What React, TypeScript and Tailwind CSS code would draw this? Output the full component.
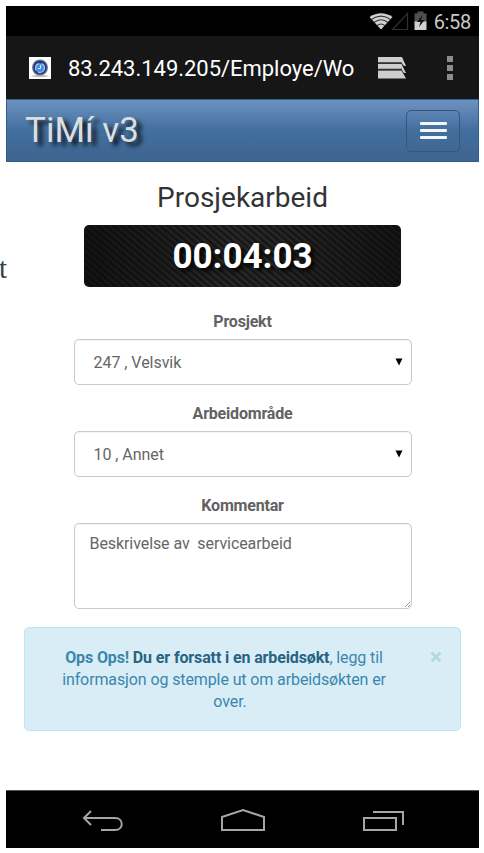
import type { ReactNode } from 'react';

function StatusBar() {
  return (
    <div className="flex h-[30px] items-center justify-end bg-black pr-[8px] pt-[1px] text-[#c8c8c8]">
      <svg width="60" height="22" viewBox="0 0 60 22" className="mr-[5px] shrink-0">
        <path d="M0.5 6 Q12 -1.5 23.5 6 L12 18.5Z" fill="#d0d0d0" />
        <path d="M2 8.7Q12 1.5 22 8.7M5 11.5Q12 6 19 11.5M8 14.7Q12 11.2 16 14.7" fill="none" stroke="#333" strokeWidth="1.1" />
        <path d="M23.5 18.5H38.5V2.5Z" fill="none" stroke="#303030" strokeWidth="1.2" />
        <path d="M48.5 0.5h6v2h3v9H45.5V2.5h3Z" fill="#505050" />
        <path d="M45.5 10.5h12v8.5H45.5Z" fill="#d0d0d0" />
        <path d="M53.5 4l-5.5 7h3.5l-1.5 5 5.5-7h-3.5Z" fill="#111" />
      </svg>
      <span className="text-[20px] leading-[30px] tracking-[-0.3px]">6:58</span>
    </div>
  );
}

function AddressBar() {
  return (
    <div className="flex h-[63px] items-center bg-[#161616] pl-[23px] text-white">
      <svg width="22" height="22" viewBox="0 0 22 22" className="shrink-0">
        <rect width="22" height="22" fill="#fff" />
        <ellipse cx="11" cy="19" rx="8" ry="1" fill="#bbb" />
        <circle cx="11" cy="10.5" r="8" fill="#6f7787" />
        <circle cx="11" cy="10.5" r="6.8" fill="#173a86" />
        <circle cx="11" cy="11" r="4.5" fill="#4b8edb" stroke="#a9cdf2" strokeWidth="1.2" strokeDasharray="9 2" />
        <path d="M11.5 8v3.5H9" fill="none" stroke="#d4e8fb" />
      </svg>
      <span className="ml-[17px] w-[288px] whitespace-nowrap pt-[2px] text-[22px] leading-[30px] tracking-[-0.03px]">83.243.149.205/Employe/Wo</span>
      <svg width="30" height="24" viewBox="0 0 30 24" className="ml-[22px] shrink-0" fill="#cecece">
        <path d="M0 1h24l4 9h-2l-3-3.5H0Z" />
        <path d="M0 8h23.5l4.5 9h-2l-3-4H0Z" />
        <path d="M0 14.5h23.5l4.5 8H0Z" />
        <path d="M0 7.2H24M0 13.5H24" stroke="#333" strokeWidth="1.4" />
      </svg>
      <div className="ml-[39px] flex flex-col gap-[3px]">
        <i className="size-[6px] bg-[#8c8c8c]" />
        <i className="size-[6px] bg-[#8c8c8c]" />
        <i className="size-[6px] bg-[#8c8c8c]" />
      </div>
    </div>
  );
}

function Header() {
  return (
    <div className="flex h-[63px] items-center justify-between border border-[#325c89] bg-linear-to-b from-[#6d92c1] via-[#426f9e] to-[#3f648f] pl-[18px] pr-[18px]">
      <span className="whitespace-nowrap text-[35px] leading-[60px] text-[#dddddd] [text-shadow:5px_4px_4px_#0b1621]">TiMí v3</span>
      <button className="flex h-[42px] w-[54px] flex-col items-center justify-center gap-[4px] rounded-[5px] border border-[#325779]" aria-label="Meny">
        <i className="h-[3px] w-[27px] rounded-[1px] bg-[#f4f7fa]" />
        <i className="h-[3px] w-[27px] rounded-[1px] bg-[#f4f7fa]" />
        <i className="h-[3px] w-[27px] rounded-[1px] bg-[#f4f7fa]" />
      </button>
    </div>
  );
}

function Label({ children }: { children: ReactNode }) {
  return <div className="h-[22px] pt-[1px] text-center text-[16px] font-bold leading-[22px] tracking-[-0.2px] text-[#626262]">{children}</div>;
}

function Select({ children }: { children: ReactNode }) {
  return (
    <div className="mt-[7px] flex h-[46px] w-[338px] items-center justify-between rounded-[5px] border border-[#c8c8c8] pl-[19px] pr-[8px] text-[16px] text-[#666] shadow-[inset_0_1px_1px_#0000000c]">
      <span className="whitespace-pre pt-[2px] tracking-[-0.04px]">{children}</span>
      <svg width="8" height="8" viewBox="0 0 8 8" className="mb-[1px]"><path d="M0.5 0.5h7L4 7.5Z" /></svg>
    </div>
  );
}

function SystemBar() {
  return (
    <div className="flex h-[58px] items-start border-t border-[#555] bg-black pl-[76px] pt-[16px]">
      <svg width="42" height="28" viewBox="0 0 42 28" fill="none" stroke="#a6a6a6" strokeWidth="2">
        <path d="M9 4L2 11L9 18M2 11H33C42 11 42 23 33 23H19" />
      </svg>
      <svg width="46" height="28" viewBox="0 0 46 28" className="ml-[96px]" fill="none" stroke="#a6a6a6" strokeWidth="2">
        <path d="M2 10L23 3L44 10V23H2Z" />
      </svg>
      <svg width="42" height="28" viewBox="0 0 42 28" className="ml-[97px]" fill="none" stroke="#a6a6a6" strokeWidth="2">
        <path d="M1 11H33V23H1ZM10 5H40V18" />
      </svg>
    </div>
  );
}

export default function App() {
  return (
    <div className="relative h-[853px] w-[484px] overflow-hidden bg-white pl-[6px] pt-[6px] font-[Roboto,sans-serif]">
      <span className="absolute left-[-1px] top-[251px] font-['Liberation_Serif',serif] text-[29px] leading-[34px] text-[#34424e]">t</span>
      <div className="flex h-[842px] w-[473px] flex-col">
        <StatusBar />
        <AddressBar />
        <Header />
        <main className="flex h-[628px] flex-col items-center">
          <h1 className="mt-[18px] h-[34px] pt-[1px] text-[28px] leading-[34px] text-[#333]">Prosjekarbeid</h1>
          <div className="mt-[11px] h-[62px] w-[317px] rounded-[5px] bg-[linear-gradient(90deg,#080808aa,transparent_45%,transparent_60%,#08080899),repeating-linear-gradient(40deg,#161616_0px,#161616_1px,#282927_3px,#282927_4px,#161616_5px)] pt-[1px] text-center text-[35px] font-bold leading-[62px] text-white [text-shadow:3px_3px_4px_#000]">
            00:04:03
          </div>
          <div className="mt-[23px]"><Label>Prosjekt</Label></div>
          <Select>247 , Velsvik</Select>
          <div className="mt-[17px]"><Label>Arbeidområde</Label></div>
          <Select>10 , Annet</Select>
          <div className="mt-[17px]"><Label>Kommentar</Label></div>
          <div className="mt-[7px] flex h-[86px] w-[338px] justify-between rounded-[5px] border border-[#c8c8c8] pl-[15px] pt-[9px] text-[16px] leading-[22px] text-[#666] shadow-[inset_0_1px_1px_#0000000c]">
            <span className="whitespace-pre tracking-[-0.08px]">Beskrivelse av  servicearbeid</span>
            <svg width="7" height="7" viewBox="0 0 7 7" className="self-end" stroke="#999"><path d="M1 6L6 1M4 6L6 4" /></svg>
          </div>
          <div className="mt-[18px] flex h-[104px] w-[437px] rounded-[5px] border border-[#bce8f1] bg-[#d9edf7] pl-[29px] pt-[19px] text-[16px] leading-[22px] tracking-[-0.11px] text-[#3a87ad]">
            <p className="w-[340px] whitespace-nowrap text-center">
              <b className="tracking-[-0.13px]">Ops Ops! <span className="text-[#276482]">Du er forsatt i en arbeidsøkt</span></b>, legg til
              <br />informasjon og stemple ut om arbeidsøkten er
              <br /><span className="pl-[12px]">over.</span>
            </p>
            <svg width="12" height="12" viewBox="0 0 12 12" className="ml-[36px] mt-[4px]" stroke="#b3d6e5" strokeWidth="2.6"><path d="M1.5 1.5L10.5 10.5M10.5 1.5L1.5 10.5" /></svg>
          </div>
        </main>
        <SystemBar />
      </div>
    </div>
  );
}
